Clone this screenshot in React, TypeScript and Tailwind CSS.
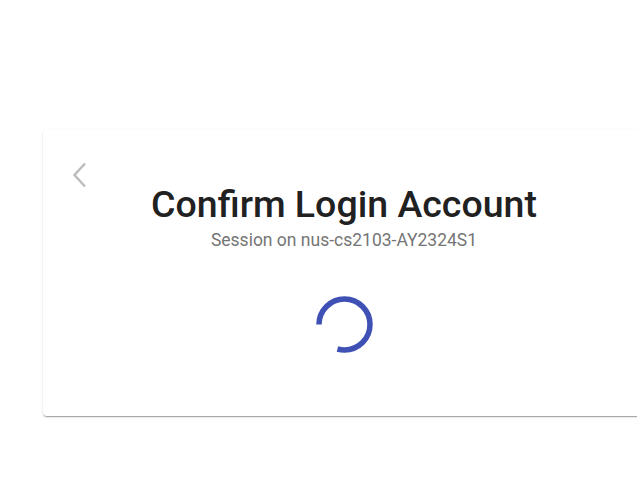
const Spinner = () => {
    // arc ~290deg, from 9 o'clock clockwise to just past 6 o'clock
    const r = 25.5;
    const c = 2 * Math.PI * r;
    return (
        <svg width="57" height="57" viewBox="0 0 57 57" className="block">
            <circle
                cx="28.5"
                cy="28.5"
                r={r}
                fill="none"
                stroke="#3f51b5"
                strokeWidth="5.5"
                strokeDasharray={`${c * 0.79} ${c}`}
                transform="rotate(180 28.5 28.5)"
            />
        </svg>
    );
};

const App = () => {
    return (
        <div
            className="h-[498px] w-[637px] overflow-hidden bg-white pt-[130px]"
            style={{ fontFamily: "Roboto, 'Liberation Sans', sans-serif" }}
        >
            <div className="relative ml-[43px] h-[286px] w-[602px] rounded bg-white shadow-[0_2px_1px_-1px_rgba(0,0,0,0.2),0_1px_1px_0_rgba(0,0,0,0.14),0_1px_3px_0_rgba(0,0,0,0.12)]">
                {/* back button */}
                <button className="absolute left-[17px] top-[25px] flex h-[40px] w-[40px] items-center justify-center">
                    <svg width="16" height="26" viewBox="0 0 16 26" fill="none">
                        <path d="M13 1.5 L2.5 13 L13 24.5" stroke="#bdbdbd" strokeWidth="2.5" />
                    </svg>
                </button>

                <div className="flex flex-col items-center pt-[52px]">
                    <h1 className="text-[37.5px] leading-[45px] font-medium text-[#212121]">
                        Confirm Login Account
                    </h1>
                    <p className="mt-[1px] text-[17.5px] leading-[25px] text-[#757575]">
                        Session on nus-cs2103-AY2324S1
                    </p>
                    <div className="mt-[43px]">
                        <Spinner />
                    </div>
                </div>
            </div>
        </div>
    );
};
export default App;
